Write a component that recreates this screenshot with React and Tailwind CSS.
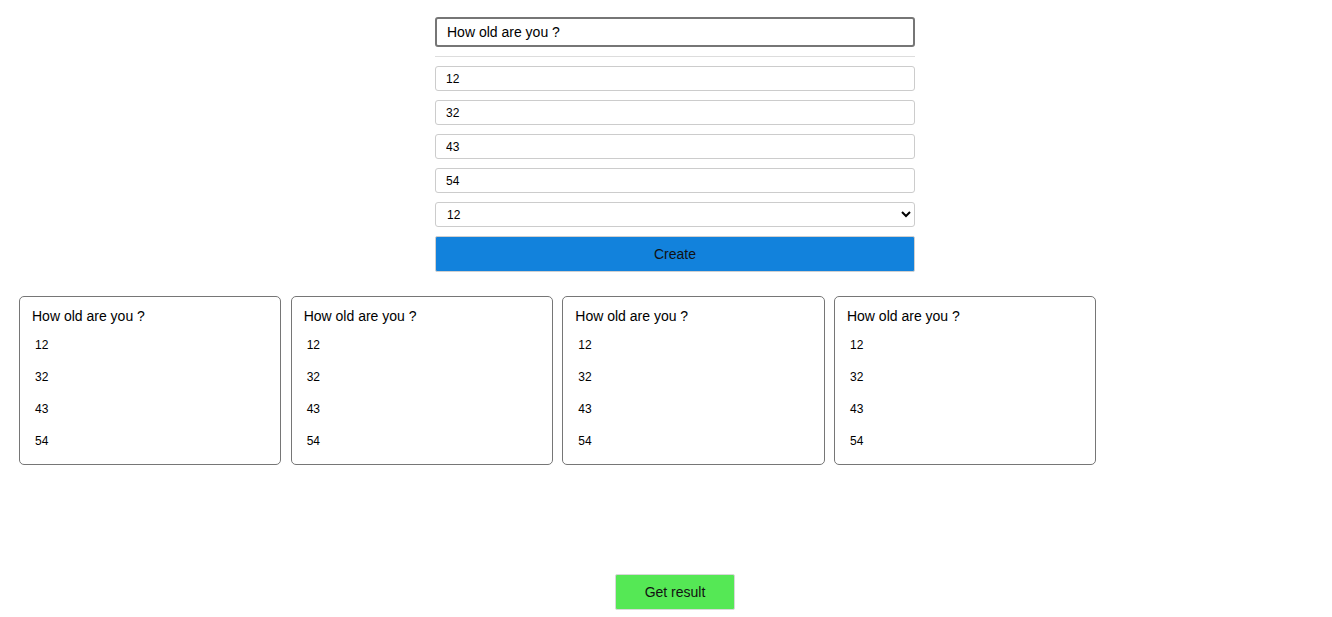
import React, { useState } from "react";

const QUESTION = "How old are you ?";
const ANSWERS = ["12", "32", "43", "54"];

function PollCard({ question, answers }) {
  return (
    <div className="w-[262.33px] h-[169px] border border-[#767676] rounded-[5px] px-[12px] pt-[11px] pb-[7px]">
      <div className="text-[14px] leading-[16px] mb-[5px]">{question}</div>
      {answers.map((a) => (
        <div key={a} className="h-[32px] flex items-center pl-[3px] text-[12px]">
          {a}
        </div>
      ))}
    </div>
  );
}

export default function App() {
  const [question, setQuestion] = useState(QUESTION);
  const [answers, setAnswers] = useState(ANSWERS);
  const [correct, setCorrect] = useState("12");

  const polls = [1, 2, 3, 4];

  return (
    <div className="min-h-[617px] bg-white text-black font-['Liberation_Sans',Arial,sans-serif] pt-[17px]">
      {/* formulario */}
      <div className="pl-[18px]">
        <div className="w-[480px] mx-auto flex flex-col">
          <input
            type="text"
            value={question}
            onChange={(e) => setQuestion(e.target.value)}
            className="h-[30px] border-2 border-[#767676] rounded-[3px] px-[10px] text-[14px] outline-none"
          />
          <hr className="mt-[9px] border-t border-[#dddddd]" />
          <div className="mt-[9px] flex flex-col gap-[9px]">
            {answers.map((a, i) => (
              <input
                key={i}
                type="text"
                value={a}
                onChange={(e) => {
                  const next = [...answers];
                  next[i] = e.target.value;
                  setAnswers(next);
                }}
                className="h-[25px] border border-[#cccccc] rounded-[3px] px-[10px] text-[12px] outline-none"
              />
            ))}
            <select
              value={correct}
              onChange={(e) => setCorrect(e.target.value)}
              className="h-[25px] border border-[#cccccc] rounded-[3px] pl-[7px] text-[12px] bg-white outline-none"
            >
              {answers.map((a, i) => (
                <option key={i} value={a}>
                  {a}
                </option>
              ))}
            </select>
            <button
              type="button"
              className="h-[36px] bg-[#1282dc] border border-[#d0d0d0] rounded-[2px] text-[14px] text-[#111]"
            >
              Create
            </button>
          </div>
        </div>
      </div>

      {/* tarjetas */}
      <div className="mt-[24px] pl-[19px] flex flex-wrap gap-[9.33px]">
        {polls.map((p) => (
          <PollCard key={p} question={QUESTION} answers={ANSWERS} />
        ))}
      </div>

      <div className="pl-[18px] mt-[109px] flex justify-center">
        <button
          type="button"
          className="w-[120px] h-[36px] bg-[#55e855] border border-[#d8d8d8] rounded-[2px] text-[14px] text-[#111]"
        >
          Get result
        </button>
      </div>
    </div>
  );
}
